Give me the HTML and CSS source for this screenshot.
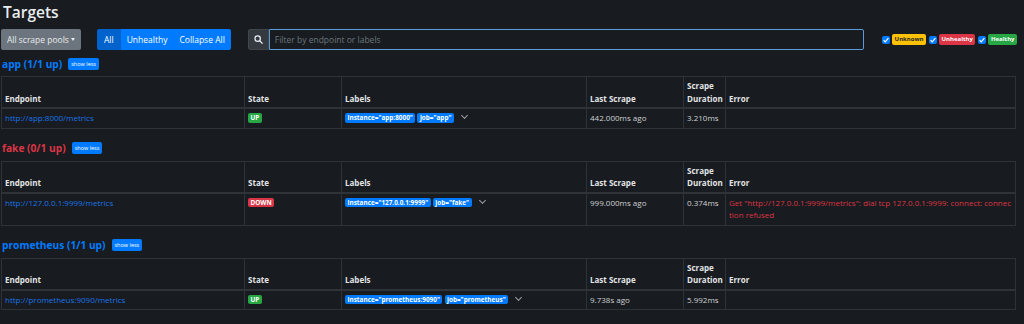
FILE: index.html
```html
<!DOCTYPE html>
<html>
<head>
    <meta charset="utf-8">
    <title>Targets</title>
    <link rel="stylesheet" href="styles.css">
</head>
<body>
    <main class="pagina">
        <h2 class="titulo">Targets</h2>

        <div class="barra">
            <button class="btn btn-cinza">All scrape pools <span class="seta"></span></button>
            <div class="grupo">
                <button class="btn btn-azul ativo">All</button>
                <button class="btn btn-azul">Unhealthy</button>
                <button class="btn btn-azul">Collapse All</button>
            </div>
            <div class="busca">
                <span class="busca-icone">
                    <svg width="9" height="9" viewBox="0 0 16 16"><circle cx="6.5" cy="6.5" r="4.8" fill="none" stroke="#e9ecef" stroke-width="2.2"/><path d="M10 10l4.5 4.5" stroke="#e9ecef" stroke-width="2.4" stroke-linecap="round"/></svg>
                </span>
                <input class="busca-campo" type="text" placeholder="Filter by endpoint or labels">
            </div>
            <div class="filtros">
                <span class="check"><svg viewBox="0 0 8 8"><path d="M1.6 4.2l1.6 1.6 3.2-3.6" fill="none" stroke="#fff" stroke-width="1.2"/></svg></span>
                <span class="badge amarelo">Unknown</span>
                <span class="check"><svg viewBox="0 0 8 8"><path d="M1.6 4.2l1.6 1.6 3.2-3.6" fill="none" stroke="#fff" stroke-width="1.2"/></svg></span>
                <span class="badge vermelho">Unhealthy</span>
                <span class="check"><svg viewBox="0 0 8 8"><path d="M1.6 4.2l1.6 1.6 3.2-3.6" fill="none" stroke="#fff" stroke-width="1.2"/></svg></span>
                <span class="badge verde">Healthy</span>
            </div>
        </div>

        <!-- app -->
        <section class="pool">
            <div class="pool-cabecalho">
                <a class="pool-nome">app (1/1 up)</a>
                <button class="btn-menos">show less</button>
            </div>
            <table class="tabela">
                <thead>
                    <tr>
                        <th class="c-endpoint">Endpoint</th>
                        <th class="c-estado">State</th>
                        <th class="c-labels">Labels</th>
                        <th class="c-ultimo">Last Scrape</th>
                        <th class="c-duracao">Scrape Duration</th>
                        <th>Error</th>
                    </tr>
                </thead>
                <tbody>
                    <tr>
                        <td><a class="link">http://app:8000/metrics</a></td>
                        <td><span class="badge verde">UP</span></td>
                        <td>
                            <span class="badge azul">instance="app:8000"</span>
                            <span class="badge azul">job="app"</span>
                            <span class="chevron"></span>
                        </td>
                        <td>442.000ms ago</td>
                        <td>3.210ms</td>
                        <td></td>
                    </tr>
                </tbody>
            </table>
        </section>

        <!-- fake -->
        <section class="pool">
            <div class="pool-cabecalho">
                <a class="pool-nome erro">fake (0/1 up)</a>
                <button class="btn-menos">show less</button>
            </div>
            <table class="tabela">
                <thead>
                    <tr>
                        <th class="c-endpoint">Endpoint</th>
                        <th class="c-estado">State</th>
                        <th class="c-labels">Labels</th>
                        <th class="c-ultimo">Last Scrape</th>
                        <th class="c-duracao">Scrape Duration</th>
                        <th>Error</th>
                    </tr>
                </thead>
                <tbody>
                    <tr>
                        <td><a class="link">http://127.0.0.1:9999/metrics</a></td>
                        <td><span class="badge vermelho">DOWN</span></td>
                        <td>
                            <span class="badge azul">instance="127.0.0.1:9999"</span>
                            <span class="badge azul">job="fake"</span>
                            <span class="chevron"></span>
                        </td>
                        <td>999.000ms ago</td>
                        <td>0.374ms</td>
                        <td class="texto-erro">Get "http://127.0.0.1:9999/metrics": dial tcp 127.0.0.1:9999: connect: connection refused</td>
                    </tr>
                </tbody>
            </table>
        </section>

        <!-- prometheus -->
        <section class="pool">
            <div class="pool-cabecalho">
                <a class="pool-nome">prometheus (1/1 up)</a>
                <button class="btn-menos">show less</button>
            </div>
            <table class="tabela">
                <thead>
                    <tr>
                        <th class="c-endpoint">Endpoint</th>
                        <th class="c-estado">State</th>
                        <th class="c-labels">Labels</th>
                        <th class="c-ultimo">Last Scrape</th>
                        <th class="c-duracao">Scrape Duration</th>
                        <th>Error</th>
                    </tr>
                </thead>
                <tbody>
                    <tr>
                        <td><a class="link">http://prometheus:9090/metrics</a></td>
                        <td><span class="badge verde">UP</span></td>
                        <td>
                            <span class="badge azul">instance="prometheus:9090"</span>
                            <span class="badge azul">job="prometheus"</span>
                            <span class="chevron"></span>
                        </td>
                        <td>9.738s ago</td>
                        <td>5.992ms</td>
                        <td></td>
                    </tr>
                </tbody>
            </table>
        </section>
    </main>
</body>
</html>
```

FILE: styles.css
```css
body {
    margin: 0;
    background-color: #181b1f;
    color: #d6d8da;
    font-family: "Open Sans", sans-serif;
    font-size: 8px;
}

.pagina {
    padding: 0 7px 0 1px;
}

.titulo {
    margin: 0;
    padding: 1px 0 0 2px;
    height: 28px;
    font-size: 15.5px;
    font-weight: 600;
    color: #e9ecef;
}

.barra {
    display: flex;
    align-items: center;
    height: 21px;
}

.btn {
    height: 21px;
    border: 0;
    border-radius: 2px;
    padding: 0 6px;
    font-family: inherit;
    font-size: 8.5px;
    color: #fff;
    white-space: nowrap;
}

.btn-cinza {
    width: 80px;
    padding: 0 3px;
    background-color: #6c757d;
    color: #e9ecef;
}

.seta {
    display: inline-block;
    vertical-align: 2px;
    border-top: 3px solid #e9ecef;
    border-left: 2.5px solid transparent;
    border-right: 2.5px solid transparent;
}

.grupo {
    display: flex;
    margin-left: 16px;
    border-radius: 2px;
    overflow: hidden;
}

.grupo .btn {
    border-radius: 0;
}

.btn-azul {
    background-color: #007bff;
}

.btn-azul.ativo {
    padding: 0 7px;
    background-color: #0062cc;
}

.busca {
    display: flex;
    flex: 1;
    margin-left: 17px;
    height: 21px;
}

.busca-icone {
    display: flex;
    align-items: center;
    justify-content: center;
    width: 21px;
    background-color: #343a40;
    border: 1px solid #41464b;
    border-radius: 2px 0 0 2px;
    box-sizing: border-box;
}

.busca-campo {
    flex: 1;
    height: 21px;
    box-sizing: border-box;
    background-color: #181b1f;
    border: 1px solid #5a9bd8;
    border-radius: 0 2px 2px 0;
    padding: 0 5px;
    font-family: inherit;
    font-size: 8.5px;
    color: #d6d8da;
    outline: none;
}

.busca-campo::placeholder {
    color: #6c757d;
}

.filtros {
    display: flex;
    align-items: center;
    gap: 2px;
    margin-left: 18px;
}

.check {
    display: inline-flex;
    width: 8px;
    height: 8px;
    border-radius: 2px;
    background-color: #007bff;
}

.check svg {
    width: 8px;
    height: 8px;
}

.filtros .badge + .check {
    margin-left: 1px;
}

.badge {
    display: inline-block;
    padding: 1px 2.5px;
    border-radius: 2px;
    font-size: 6.4px;
    font-weight: 700;
    line-height: 7.5px;
    color: #fff;
    white-space: nowrap;
}

.filtros .badge {
    padding: 1.5px 2.5px;
    font-size: 6px;
}

.amarelo {
    background-color: #ffc107;
    color: #212529;
}

.vermelho {
    background-color: #dc3545;
}

.verde {
    background-color: #28a745;
}

.azul {
    background-color: #007bff;
}

.pool-cabecalho {
    display: flex;
    align-items: center;
    gap: 6px;
    height: 15px;
    margin-top: 6px;
    margin-bottom: 5px;
    padding-left: 1px;
}

.pool-nome {
    font-size: 10.2px;
    font-weight: 700;
    color: #007bff;
}

.pool-nome.erro {
    color: #dc3545;
}

.btn-menos {
    height: 12px;
    padding: 0 3px;
    border: 0;
    border-radius: 2px;
    background-color: #007bff;
    color: #fff;
    font-family: inherit;
    font-size: 5.5px;
}

.pool + .pool .pool-cabecalho {
    margin-top: 12px;
}

.tabela {
    width: 1015px;
    border-collapse: collapse;
    table-layout: fixed;
}

.tabela th,
.tabela td {
    border: 1px solid #2e3338;
    padding: 2px 3px;
    line-height: 12.5px;
    text-align: left;
}

.tabela th {
    vertical-align: bottom;
    font-weight: 700;
    color: #e2e4e6;
    border-bottom-width: 2px;
    height: 26px;
}

.tabela td {
    vertical-align: top;
    padding-top: 3px;
    padding-bottom: 3px;
    color: #ced1d4;
}

.c-endpoint { width: 236px; }
.c-estado { width: 90px; }
.c-labels { width: 238px; }
.c-ultimo { width: 90px; }
.c-duracao { width: 35px; }

.link {
    color: #1a74e8;
}

.tabela td .badge {
    vertical-align: 1px;
}

.chevron {
    display: inline-block;
    width: 4px;
    height: 4px;
    margin-left: 6px;
    border-right: 1px solid #9aa0a6;
    border-bottom: 1px solid #9aa0a6;
    transform: rotate(45deg);
    vertical-align: 3px;
}

.tabela .texto-erro {
    color: #dc3545;
    word-break: break-all;
}
```
